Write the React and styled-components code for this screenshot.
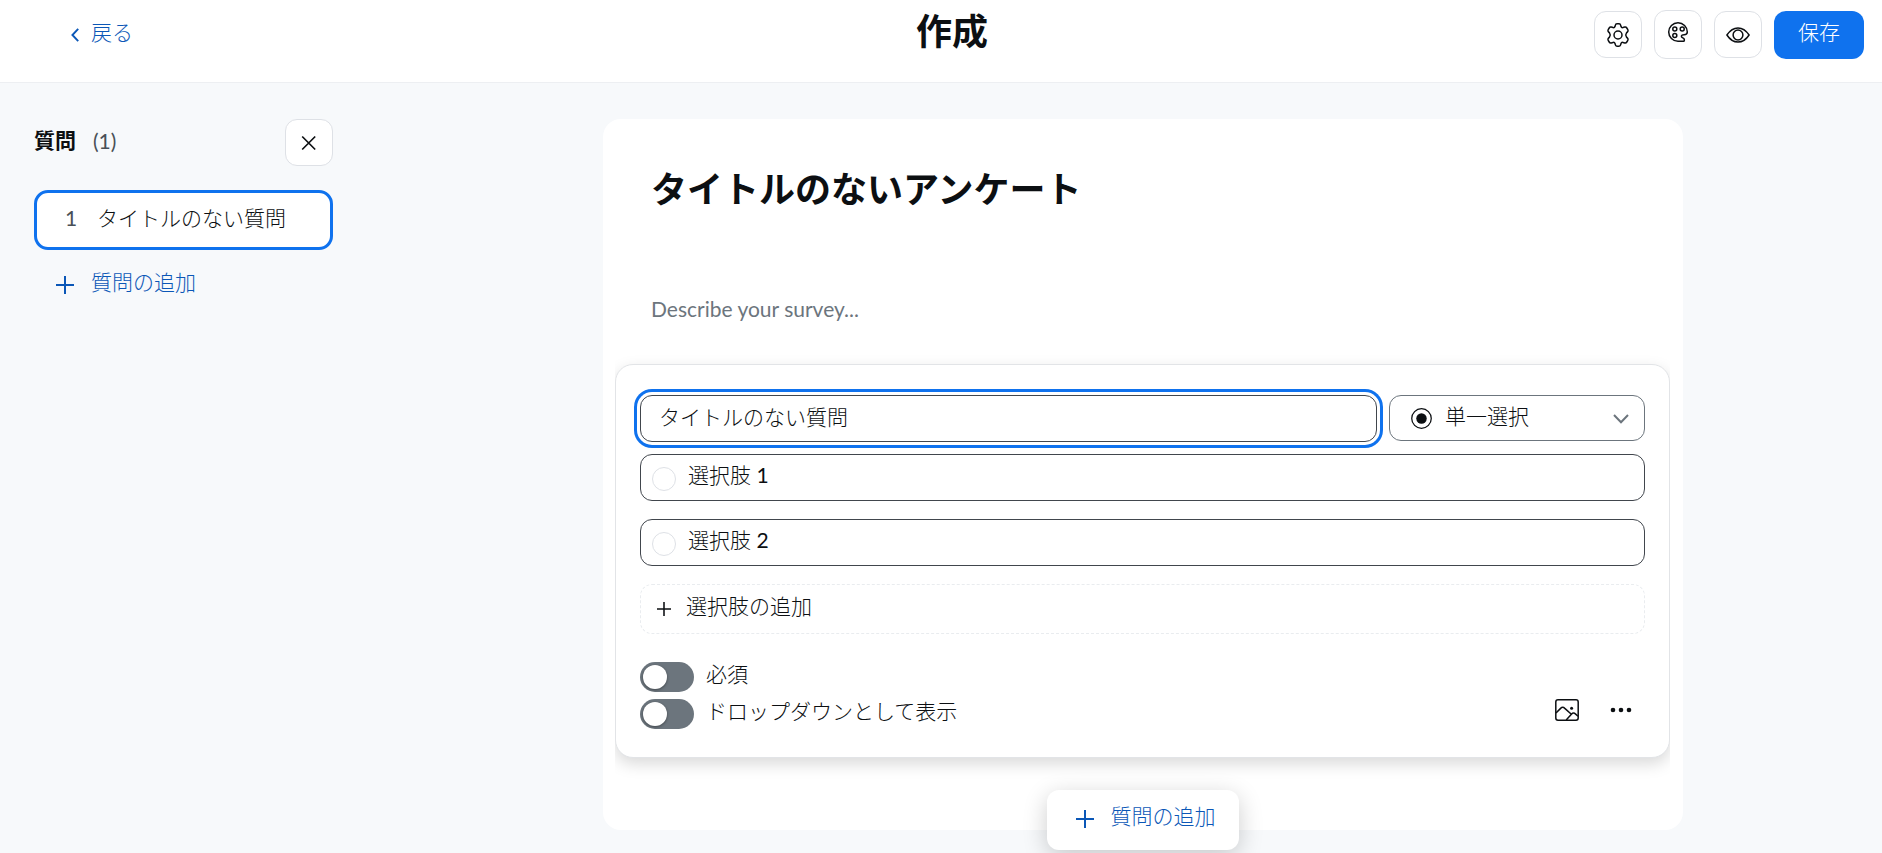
import React, { useState } from "react";
import styled, { createGlobalStyle } from "styled-components";

const GlobalStyle = createGlobalStyle`
  * {
    box-sizing: border-box;
  }
  body {
    margin: 0;
    background: #f7f9fb;
    color: #0c0f12;
    font-family: Lato, "Noto Sans CJK JP Light", "Noto Sans CJK JP", sans-serif;
    font-size: 21px;
    line-height: 30px;
  }
  button, input, select {
    margin: 0;
    font: inherit;
    color: inherit;
  }
  button {
    cursor: pointer;
  }
`;

const GearIcon = () => (
  <svg width="24" height="24" viewBox="0 0 24 24" fill="none" stroke="currentColor" strokeWidth="1.5">
    <path
      strokeLinejoin="round"
      d="M9.300 2.300Q9.600.8 11 .8h2q1.400 0 1.700 1.500l.3 1.300q.5 1.300 1.900 1l1.900-.5q1.300-.3 2 .9l1 1.700q.7 1.200-.3 2.200l-1 1q-1.500 2.100 0 4.200l1 1q1 1 .3 2.200l-1 1.700q-.7 1.200-2 .9l-1.900-.5q-1.400-.3-1.900 1l-.3 1.300q-.3 1.500-1.700 1.500h-2q-1.400 0-1.700-1.500L9 20.400q-.5-1.300-1.900-1l-1.900.5q-1.300.3-2-.9l-1-1.700q-.7-1.200.3-2.200l1-1q1.500-2.100 0-4.200l-1-1q-1-1-.3-2.200l1-1.700q.7-1.200 2-.9l1.900.5q1.400.3 1.900-1z"
    />
    <circle cx="12" cy="12" r="4" />
  </svg>
);

const CloseIcon = () => (
  <svg width="24" height="24" viewBox="0 0 24 24" fill="none" stroke="currentColor" strokeWidth="1.7">
    <path d="M5.200 5.500l13 13M18.200 5.500l-13 13" />
  </svg>
);

const PlusIcon = ({ size = 18, weight = 2 }) => (
  <svg width={size} height={size} viewBox="0 0 18 18" fill="none" stroke="currentColor" strokeWidth={weight}>
    <path d="M9 0v18M0 9h18" />
  </svg>
);

const BackIcon = () => (
  <svg width="8" height="14" viewBox="0 0 8 14" fill="none" stroke="currentColor" strokeWidth="1.9">
    <path d="M7.2 .8L1.4 7l5.8 6.2" />
  </svg>
);

const PaletteIcon = () => (
  <svg width="24" height="24" viewBox="0 0 24 24" fill="none" stroke="currentColor" strokeWidth="1.5">
    <path
      strokeLinejoin="round"
      d="M17.600 21.300H12A9.300 9.300 0 1 1 21.300 12c0 1.700-1.400 2.700-3.200 2.700-2 0-3 .8-2.600 2.100.3 1 1.900 1.100 2.500 2 .6.8.4 2.500-.4 2.500z"
    />
    <circle cx="8.800" cy="9" r="2" />
    <circle cx="16.200" cy="9" r="2" />
    <circle cx="8.800" cy="15.600" r="2" />
  </svg>
);

const EyeIcon = () => (
  <svg width="24" height="24" viewBox="0 0 24 24" fill="none" stroke="currentColor" strokeWidth="1.5">
    <path strokeLinejoin="round" d="M.9 12C4 7.300 7.800 4.900 12 4.900S20 7.300 23.100 12C20 16.700 16.200 19.100 12 19.100S4 16.700.9 12z" />
    <circle cx="12" cy="12" r="4.900" />
  </svg>
);

const RadioIcon = () => (
  <svg width="21" height="21" viewBox="0 0 20 20">
    <circle cx="10" cy="10" r="9.300" fill="none" stroke="currentColor" strokeWidth="1.200" />
    <circle cx="10" cy="10" r="5" fill="currentColor" />
  </svg>
);

const ChevronIcon = () => (
  <svg width="16" height="12" viewBox="0 0 16 12" fill="none" stroke="#6c757d" strokeWidth="2">
    <path d="M1 3l7 7.200L15 3" />
  </svg>
);

const ImageIcon = () => (
  <svg width="24" height="22" viewBox="0 0 24 22" fill="none" stroke="currentColor" strokeWidth="1.500">
    <rect x=".8" y=".8" width="22.400" height="20.400" rx="2.200" />
    <path d="M1 14l4.600-4.600c1.400-1.400 2.800-1.400 4.200 0l6 5.400M11.200 21l5.400-5.900c1.200-1.400 2.600-1.400 3.800-.2L23 17.200" />
    <circle cx="16.600" cy="9.200" r="1.500" fill="currentColor" stroke="none" />
  </svg>
);

const DotsIcon = () => (
  <svg width="22" height="6" viewBox="0 0 22 6" fill="currentColor">
    <circle cx="3" cy="3" r="2.300" />
    <circle cx="11" cy="3" r="2.300" />
    <circle cx="19" cy="3" r="2.300" />
  </svg>
);

const App = () => {
  const [question, setQuestion] = useState("タイトルのない質問");
  const [options, setOptions] = useState(["選択肢 1", "選択肢 2"]);

  const onOptionChange = (index, value) => {
    setOptions((cur) => cur.map((val, i) => (i === index ? value : val)));
  };

  return (
    <>
      <GlobalStyle />
      <Header>
        <BackLink href="#back">
          <BackIcon />
          <Label>戻る</Label>
        </BackLink>
        <PageTitle>作成</PageTitle>
        <Actions>
          <IconButton aria-label="設定">
            <GearIcon />
          </IconButton>
          <IconButton aria-label="デザイン" $raised>
            <PaletteIcon />
          </IconButton>
          <IconButton aria-label="プレビュー">
            <EyeIcon />
          </IconButton>
          <SaveButton>保存</SaveButton>
        </Actions>
      </Header>
      <Body>
        <Sidebar>
          <SidebarHeader>
            <SidebarTitle>質問</SidebarTitle>
            <Count>(1)</Count>
            <IconButton aria-label="閉じる">
              <CloseIcon />
            </IconButton>
          </SidebarHeader>
          <QuestionItem>
            <QuestionNumber>1</QuestionNumber>
            {question}
          </QuestionItem>
          <AddLink>
            <PlusIcon />
            <Label>質問の追加</Label>
          </AddLink>
        </Sidebar>
        <Main>
          <Survey>
            <SurveyTitle>タイトルのないアンケート</SurveyTitle>
            <Description aria-label="説明" placeholder="Describe your survey..." />
            <Card>
              <QuestionRow>
                <QuestionInput
                  aria-label="質問のタイトル"
                  value={question}
                  onChange={(e) => setQuestion(e.target.value)}
                />
                <TypeField>
                  <RadioIcon />
                  <TypeSelect aria-label="質問の種類">
                    <option>単一選択</option>
                  </TypeSelect>
                  <ChevronIcon />
                </TypeField>
              </QuestionRow>
              <Options>
                {options.map((val, i) => (
                  <Option key={i}>
                    <OptionMark />
                    <OptionInput
                      aria-label={`選択肢 ${i + 1}`}
                      value={val}
                      onChange={(e) => onOptionChange(i, e.target.value)}
                    />
                  </Option>
                ))}
                <AddOption
                  onClick={() => setOptions((cur) => [...cur, `選択肢 ${cur.length + 1}`])}
                >
                  <PlusIcon size={14} weight={2} />
                  <Label>選択肢の追加</Label>
                </AddOption>
              </Options>
              <CardFooter>
                <Toggles>
                  <ToggleLabel>
                    <Toggle type="checkbox" />
                    <Label>必須</Label>
                  </ToggleLabel>
                  <ToggleLabel>
                    <Toggle type="checkbox" />
                    <Label>ドロップダウンとして表示</Label>
                  </ToggleLabel>
                </Toggles>
                <Tools>
                  <ToolButton aria-label="画像">
                    <ImageIcon />
                  </ToolButton>
                  <ToolButton aria-label="その他">
                    <DotsIcon />
                  </ToolButton>
                </Tools>
              </CardFooter>
            </Card>
            <AddQuestion>
              <PlusIcon />
              <Label>質問の追加</Label>
            </AddQuestion>
          </Survey>
        </Main>
      </Body>
    </>
  );
};

export default App;

/* text beside an icon, lifted a little like the text in the fields */
const Label = styled.span`
  height: 30px;
  line-height: 24px;
`;
const Header = styled.header`
  display: grid;
  grid-template-columns: 1fr auto 1fr;
  align-items: start;
  height: 83px;
  padding: 11px 18px 0 40px;
  background: #fff;
  border-bottom: 1px solid #edeff2;
`;
const BackLink = styled.a`
  display: flex;
  align-items: center;
  gap: 12px;
  padding: 9px 0 0 31px;
  color: #0b57b7;
  text-decoration: none;
`;
const PageTitle = styled.h1`
  margin: 0;
  font-size: 36px;
  font-weight: 700;
  line-height: 40px;
  font-family: Lato, "Noto Sans CJK JP", sans-serif;
`;
const Actions = styled.div`
  display: flex;
  justify-content: flex-end;
  gap: 12px;
`;
const IconButton = styled.button`
  display: flex;
  align-items: center;
  justify-content: center;
  width: 48px;
  height: ${(props) => (props.$raised ? "49px" : "47px")};
  margin-top: ${(props) => (props.$raised ? "-1px" : "0")};
  padding: ${(props) => (props.$raised ? "0 0 6px" : "0")};
  background: #fff;
  border: 1px solid #dee1e6;
  border-radius: 12px;
`;
const SaveButton = styled.button`
  width: 90px;
  height: 48px;
  padding: 0 0 6px;
  background: #0f72ee;
  border: 0;
  border-radius: 12px;
  color: #fff;
`;
const Body = styled.div`
  display: flex;
`;
const Sidebar = styled.aside`
  flex: none;
  width: 404px;
  padding: 36px 71px 0 34px;
`;
const SidebarHeader = styled.div`
  display: flex;
  align-items: center;
  margin-bottom: 24px;

  ${IconButton} {
    margin-left: auto;
  }
`;
const SidebarTitle = styled.h2`
  margin: 0 17px 0 0;
  padding-bottom: 6px;
  font-size: 21px;
  font-weight: 700;
  font-family: Lato, "Noto Sans CJK JP", sans-serif;
`;
const Count = styled.span`
  padding-bottom: 4px;
  color: #495057;
`;
const QuestionItem = styled.button`
  display: flex;
  align-items: center;
  width: 100%;
  height: 60px;
  padding: 0 28px 4px;
  background: #fff;
  border: 3px solid #0f72ee;
  border-radius: 14px;
`;
const QuestionNumber = styled.span`
  width: 32px;
  color: #495057;
  text-align: left;
`;
const AddLink = styled.button`
  display: flex;
  align-items: center;
  gap: 17px;
  margin-top: 20px;
  padding: 0 0 0 22px;
  background: none;
  border: 0;
  color: #0b57b7;
`;
const Main = styled.main`
  flex: 1;
  min-width: 0;
  padding: 36px 24px 24px;
`;
const Survey = styled.section`
  display: flex;
  flex-direction: column;
  max-width: 1080px;
  margin: 0 auto;
  padding: 43px 13px 0 12px;
  background: #fff;
  border-radius: 18px;
`;
const SurveyTitle = styled.h2`
  margin: 0 36px;
  font-size: 36px;
  font-weight: 700;
  line-height: 54px;
  font-family: Lato, "Noto Sans CJK JP", sans-serif;
`;
const Description = styled.input`
  height: 48px;
  margin: 68px 36px 32px;
  padding: 0;
  background: none;
  border: 0;

  &::placeholder {
    color: #6c757d;
    opacity: 1;
  }
`;
const Card = styled.div`
  padding: 30px 24px 28px;
  background: #fff;
  border: 1px solid #e2e4e7;
  border-radius: 18px;
  box-shadow: 0 6px 16px rgba(0, 0, 0, 0.15);
  /* shadow shows above and below the card only */
  clip-path: inset(-24px 0);
`;
const QuestionRow = styled.div`
  display: flex;
  gap: 12px;
`;
const QuestionInput = styled.input`
  flex: 1;
  min-width: 0;
  height: 47px;
  padding: 0 18px 6px;
  background: #fff;
  border: 1px solid #41464d;
  border-radius: 12px;
  outline: none;
  box-shadow: 0 0 0 3px #fff, 0 0 0 6px #0f72ee;
`;
const TypeField = styled.div`
  display: flex;
  align-items: center;
  width: 256px;
  height: 46px;
  padding: 0 15px 0 21px;
  border: 1px solid #6c757d;
  border-radius: 12px;
`;
const TypeSelect = styled.select`
  flex: 1;
  min-width: 0;
  padding: 0 0 4px 13px;
  appearance: none;
  background: none;
  border: 0;
  outline: none;
`;
const Options = styled.div`
  display: flex;
  flex-direction: column;
  gap: 18px;
  margin-top: 12px;
`;
const Option = styled.div`
  display: flex;
  align-items: center;
  gap: 12px;
  height: 47px;
  padding: 2px 11px 0;
  border: 1px solid #41464d;
  border-radius: 12px;
`;
const OptionMark = styled.span`
  width: 24px;
  height: 24px;
  border: 1px solid #dee1e6;
  border-radius: 50%;
`;
const OptionInput = styled.input`
  flex: 1;
  min-width: 0;
  padding: 0 0 8px;
  background: none;
  border: 0;
  outline: none;
`;
const AddOption = styled.button`
  display: flex;
  align-items: center;
  gap: 15px;
  height: 50px;
  padding: 0 16px;
  background: none;
  border: 1px dashed #e9ecef;
  border-radius: 12px;
`;
const CardFooter = styled.div`
  display: flex;
  align-items: flex-end;
  justify-content: space-between;
  margin-top: 28px;
`;
const Toggles = styled.div`
  display: flex;
  flex-direction: column;
  gap: 7px;
`;
const ToggleLabel = styled.label`
  display: flex;
  align-items: center;
  gap: 12px;
`;
const Toggle = styled.input`
  flex: none;
  width: 54px;
  height: 30px;
  margin: 0;
  padding: 3px;
  appearance: none;
  background: #6c757d;
  border-radius: 15px;

  &::before {
    content: "";
    display: block;
    width: 24px;
    height: 24px;
    background: #fff;
    border-radius: 50%;
    box-shadow: 0 1px 3px rgba(0, 0, 0, 0.4);
  }
  &:checked {
    background: #0f72ee;
  }
  &:checked::before {
    margin-left: 24px;
  }
`;
const Tools = styled.div`
  display: flex;
  gap: 6px;
`;
const ToolButton = styled.button`
  display: flex;
  align-items: center;
  justify-content: center;
  width: 48px;
  height: 38px;
  padding: 0;
  background: none;
  border: 0;
`;
const AddQuestion = styled.button`
  display: flex;
  align-items: center;
  align-self: center;
  gap: 17px;
  height: 60px;
  margin: 32px 0 -20px;
  padding: 0 23px 2px 29px;
  background: #fff;
  border: 0;
  border-radius: 12px;
  box-shadow: 0 6px 24px rgba(0, 0, 0, 0.2);
  color: #0b57b7;
`;
